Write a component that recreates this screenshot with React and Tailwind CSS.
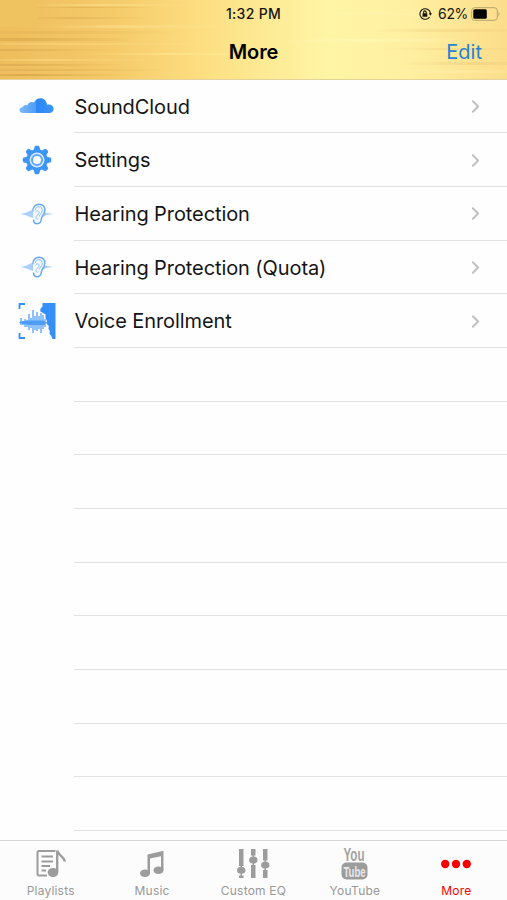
import { ChevronRight } from "lucide-react";

const CloudIcon = () => (
    <svg width="36" height="18" viewBox="0 0 36 18">
        <defs>
            <linearGradient id="cloud" x1="0" x2="1">
                <stop offset="0" stopColor="#82b9f8" />
                <stop offset=".48" stopColor="#4b9bf7" />
                <stop offset=".5" stopColor="#2c86f5" />
                <stop offset="1" stopColor="#3b96fb" />
            </linearGradient>
        </defs>
        <path
            d="M4 16C1.500 16 .5 14.700 .5 13.100C.5 11.300 1.800 10.200 3.600 10.200C4.200 8.400 6.500 7.600 8.200 8.400C9 5.500 12.500 4 15 5.500C17 1.200 23 -.2 26.300 3.400C27.300 4.600 27.800 6 28 7.700C31.500 6.800 34.700 8.600 34.700 11.700C34.700 14.300 32.800 16 30.300 16Z"
            fill="url(#cloud)"
        />
    </svg>
);

const GearIcon = () => (
    <svg width="30" height="30" viewBox="0 0 30 30" fill="none">
        <g fill="#3c95f9">
            {[0, 45, 90, 135, 180, 225, 270, 315].map((a) => (
                <path key={a} d="M11.500 6L12.600 1.800Q13 .8 14 .8H16Q17 .8 17.400 1.800L18.500 6Z" transform={`rotate(${a} 15 15)`} />
            ))}
            <circle cx="15" cy="15" r="10.700" />
        </g>
        <circle cx="15" cy="15" r="7.500" fill="#d5e9ff" />
        <circle cx="15" cy="15" r="5" fill="#fff" stroke="#5fa8f9" strokeWidth="2" />
    </svg>
);

const EarIcon = () => (
    <svg width="34" height="22" viewBox="0 0 34 22" fill="none">
        <path d="M.5 11L6 9.700L11.500 7L13 9V15L11.500 14.500L6 12.300Z" fill="#a9cffa" />
        <path d="M22 10L24 8L26 10L33.500 11L26 12L24 13.500L21 12.500Z" fill="#a9cffa" />
        <path
            d="M13.300 7.500C13 3.500 15.500 1.200 19 1.200C23 1.200 25.300 4 24.800 7.500C24.300 11.500 22 12.500 21.500 15.500C21.200 18.800 19.500 20.800 17 20.800C14.300 20.800 13.300 19 13.700 16.500C14 14.500 13.300 11 13.300 7.500Z"
            fill="#f5faff"
        />
        <path
            d="M12.800 8.500C12.500 4 15.500 1.200 19 1.200C23 1.200 25.300 4 24.800 7.500C24.300 11.500 22 12.500 21.500 15.500C21.200 18.800 19.500 20.800 17 20.800C14.600 20.800 13.500 19.500 13.500 16.500"
            stroke="#69a9f3"
            strokeWidth="1.500"
        />
        <path
            d="M15.300 7.200C15.500 4.700 17.200 3.600 19 3.700C21.300 3.800 22.600 5.600 22.200 8C21.900 10 19.800 11.300 19.300 13.500M15.500 9C17.800 6.500 20 8.500 18.700 10.800C17.800 12.300 16 12.500 16 14.500C16 16 17.300 17 18.300 15.500"
            stroke="#8abdf7"
            strokeWidth="1"
        />
    </svg>
);

const VoiceIcon = () => (
    <svg width="38" height="38" viewBox="0 0 38 38" fill="none">
        <path d="M7 2H1.500V7M1.500 31V36H7" stroke="#3490f8" strokeWidth="1.800" />
        <path
            d="M24.500 1H37.500V37H34.500L33 33.500L31.500 32L31.800 29L30.500 27L30.800 24L28.500 21.500L29 19L27.500 16V12.500L25 11L22.300 9.500L22.500 6.500L24.500 4.500Z"
            fill="#3490f8"
        />
        <path
            d="M3 16V23M5 19V23M7 17V25M9 18V25M11 12V28M13 16V26M15 8V31M17 14V28M19 10V29M21 14V27M23 11V31M25 13V27M27 17V25"
            stroke="#62a8f8"
            strokeWidth="1.400"
        />
        <path d="M.5 20.500L5 19L11 18.500H25L29 20.500L26 23H11L5 22Z" fill="#3d94f7" opacity=".8" />
    </svg>
);

const PlaylistIcon = () => (
    <svg width="32" height="30" viewBox="0 0 32 30" fill="none" stroke="#9c9c9c" strokeWidth="2">
        <path d="M20.500 2H4Q2.500 2 2.500 3.500V25Q2.500 26.500 4 26.500H12M6.500 7.500H18M6.500 12.500H18M6.500 17H15M6.500 21.500H11" />
        <ellipse cx="18" cy="23.500" rx="5.300" ry="4.500" fill="#9c9c9c" stroke="none" />
        <path d="M22.200 23V1.500C22.700 6 28.500 6.500 30 12.500" strokeWidth="2.300" />
    </svg>
);

const MusicIcon = () => (
    <svg width="26" height="28" viewBox="0 0 26 28" fill="#9c9c9c">
        <path d="M8.500 4.500L24.500 .7V20H22V6.200L11 8.600V24H8.500Z" />
        <ellipse cx="6" cy="23.300" rx="5" ry="3.800" />
        <ellipse cx="19.500" cy="20.200" rx="5" ry="3.800" />
    </svg>
);

const EqIcon = () => (
    <svg width="34" height="32" viewBox="0 0 34 32" fill="#9c9c9c">
        <path d="M3 1H7.500V18H3ZM3 27.500H7.500V30H3ZM15 1H19.500V7.500H15ZM15 17H19.500V30H15ZM27 1H31.500V12.500H27ZM27 22H31.500V30H27Z" />
        <ellipse cx="5.250" cy="22.200" rx="4.200" ry="3.500" />
        <ellipse cx="17.250" cy="12" rx="4.200" ry="3.500" />
        <ellipse cx="29.250" cy="17" rx="4.200" ry="3.500" />
        <path d="M4.500 18H6V20H4.500ZM4.500 25H6V28H4.500ZM16.500 7H18V9H16.500ZM16.500 15H18V18H16.500ZM28.500 12H30V14H28.500ZM28.500 20H30V23H28.500Z" />
    </svg>
);

const YouTubeIcon = () => (
    <svg className="overflow-visible" width="28" height="36" viewBox="0 0 28 36" fontFamily="Liberation Sans" textAnchor="middle">
        <text x="13" y="14.500" fontSize="19" fontWeight="bold" fill="#a3a3a3" textLength="21" lengthAdjust="spacingAndGlyphs">
            You
        </text>
        <rect x=".5" y="16.500" width="26" height="17" rx="5" fill="#9c9c9c" />
        <text x="13.500" y="30.500" fontSize="15" fontWeight="bold" fill="#e9e9e9" textLength="22" lengthAdjust="spacingAndGlyphs">
            Tube
        </text>
    </svg>
);

const DotsIcon = () => (
    <svg width="32" height="10" viewBox="0 0 32 10" fill="#f80000">
        <circle cx="5.200" cy="5" r="4.200" />
        <circle cx="16" cy="5" r="4.200" />
        <circle cx="26.800" cy="5" r="4.200" />
    </svg>
);

// y, x, width, height, colour of each brushed line in the header
const streaks = [
    [4, 30, 160, 2, "#fff0a0"],
    [7, 30, 130, 1, "#c99b45"],
    [17, 20, 128, 2, "#d1a24c"],
    [25, 40, 200, 3, "#ffe9a0"],
    [31, -60, 240, 3, "#e0af50"],
    [38, -60, 200, 3, "#c9963c"],
    [43, -60, 290, 2, "#ffe391"],
    [49, -60, 180, 2, "#cf9d49"],
    [53, 80, 220, 2, "#fff2a1"],
    [59, -40, 200, 2, "#ffe79a"],
    [64, -60, 190, 2, "#cc9944"],
    [69, -60, 230, 2, "#d5a24d"],
    [74, -50, 180, 2, "#b98c3d"],
    [12, 310, 160, 3, "#fff6b5"],
    [29, 370, 190, 3, "#edca7a"],
    [39, 280, 200, 3, "#fffbc4"],
    [48, 380, 190, 2, "#f0cd80"],
    [62, 400, 180, 3, "#e8c578"],
    [70, 370, 190, 3, "#fff2b0"],
];

const HeaderTexture = () => (
    <svg className="absolute inset-0" width="507" height="79" viewBox="0 0 507 79">
        {streaks.map(([y, x, w, h, c], i) => (
            <g key={i}>
                <linearGradient id={`streak${i}`} x1="0" x2="1">
                    <stop offset="0" stopColor={c} stopOpacity="0" />
                    <stop offset=".4" stopColor={c} stopOpacity=".4" />
                    <stop offset="1" stopColor={c} stopOpacity="0" />
                </linearGradient>
                <rect x={x} y={y} width={w} height={h} fill={`url(#streak${i})`} />
            </g>
        ))}
        <path d="M0 0H38V18Q36 27 25 27H0Z" fill="#efc35f" />
    </svg>
);

const StatusIcons = () => (
    <div className="flex items-center">
        <svg width="14" height="14" viewBox="0 0 14 14" fill="none" stroke="#17150d" strokeWidth="1.100">
            <path d="M11.600 4A5.300 5.300 0 1 0 11.600 10M12.300 7A5.500 5.500 0 0 0 11.600 4" />
            <path d="M10.800 6.300H14L12.400 8.700Z" fill="#17150d" stroke="none" />
            <rect x="4.500" y="6.300" width="4.800" height="3.400" rx=".5" fill="#17150d" stroke="none" />
            <path d="M5.600 6.500V5.200A1.300 1.300 0 0 1 8.200 5.200V6.500" />
        </svg>
        <span className="ml-[6px] w-[31px] whitespace-nowrap text-[14px] tracking-[-0.3px]">62%</span>
        <svg className="ml-[2px]" width="30" height="14" viewBox="0 0 30 14">
            <rect x=".7" y=".7" width="25.600" height="12.600" rx="3" fill="none" stroke="#b3a670" />
            <rect x="2.300" y="2.300" width="13.500" height="9.400" rx="1.500" fill="#000" />
            <path d="M27.500 4.500Q29.500 7 27.500 9.500Z" fill="#b3a670" />
        </svg>
    </div>
);

const items = [
    { label: "SoundCloud", icon: <CloudIcon /> },
    { label: "Settings", icon: <GearIcon /> },
    { label: "Hearing Protection", icon: <EarIcon /> },
    { label: "Hearing Protection (Quota)", icon: <EarIcon /> },
    { label: "Voice Enrollment", icon: <VoiceIcon /> },
];

const tabs = [
    { label: "Playlists", icon: <PlaylistIcon /> },
    { label: "Music", icon: <MusicIcon /> },
    { label: "Custom EQ", icon: <EqIcon /> },
    { label: "YouTube", icon: <YouTubeIcon /> },
    { label: "More", icon: <DotsIcon />, active: true },
];

const App = () => {
    return (
        <div className="flex h-[900px] w-[507px] flex-col overflow-hidden bg-[#fefefe] font-['Inter',sans-serif] text-[#151515]">
            {/* Header */}
            <header className="relative h-[79.500px] shrink-0 border-b border-[#e3d29b] bg-[linear-gradient(90deg,#eebd5c_0%,#f5ca69_22%,#fcdc7e_38%,#fdea94_52%,#fff5a5_65%,#fff0a1_80%,#fbdd8b_100%)]">
                <HeaderTexture />
                <div className="relative grid h-[27px] grid-cols-[1fr_auto_1fr] items-center">
                    <span />
                    <span className="text-[14px] font-medium tracking-[0.3px]">1:32 PM</span>
                    <div className="flex justify-end pr-[6px]">
                        <StatusIcons />
                    </div>
                </div>
                <div className="relative grid h-[50px] grid-cols-[1fr_auto_1fr] items-center">
                    <span />
                    <h1 className="text-[20px] font-semibold tracking-[-0.1px] text-black">More</h1>
                    <button className="justify-self-end pr-[25px] text-[20px] text-[#2583d5]">Edit</button>
                </div>
            </header>

            {/* List */}
            <main className="min-h-0 flex-1 overflow-hidden">
                {items.map((item) => (
                    <div key={item.label} className="flex h-[53.700px]">
                        <div className="flex w-[74px] shrink-0 items-center justify-center">{item.icon}</div>
                        <div className="flex flex-1 items-center justify-between border-b border-[#e2e2e2] pt-[1.500px] pr-[21px]">
                            <span className="pl-[0.500px] text-[20px] tracking-[-0.09px]">{item.label}</span>
                            <ChevronRight size={21} strokeWidth={2.400} color="#c1c1c3" />
                        </div>
                    </div>
                ))}
                {Array.from({ length: 9 }).map((_, i) => (
                    <div key={i} className="ml-[74px] h-[53.700px] border-b border-[#e2e2e2]" />
                ))}
            </main>

            {/* Tab bar */}
            <nav className="grid h-[60px] shrink-0 grid-cols-5 border-t border-[#dadada] bg-[#fcfcfc]">
                {tabs.map((tab) => (
                    <div key={tab.label} className="flex flex-col items-center">
                        <div className="flex h-[43px] items-center justify-center pt-[2px]">{tab.icon}</div>
                        <span className={`text-[12px] leading-[14px] tracking-[0.2px] ${tab.active ? "text-[#f80000]" : "text-[#999]"}`}>
                            {tab.label}
                        </span>
                    </div>
                ))}
            </nav>
        </div>
    );
};

export default App;
